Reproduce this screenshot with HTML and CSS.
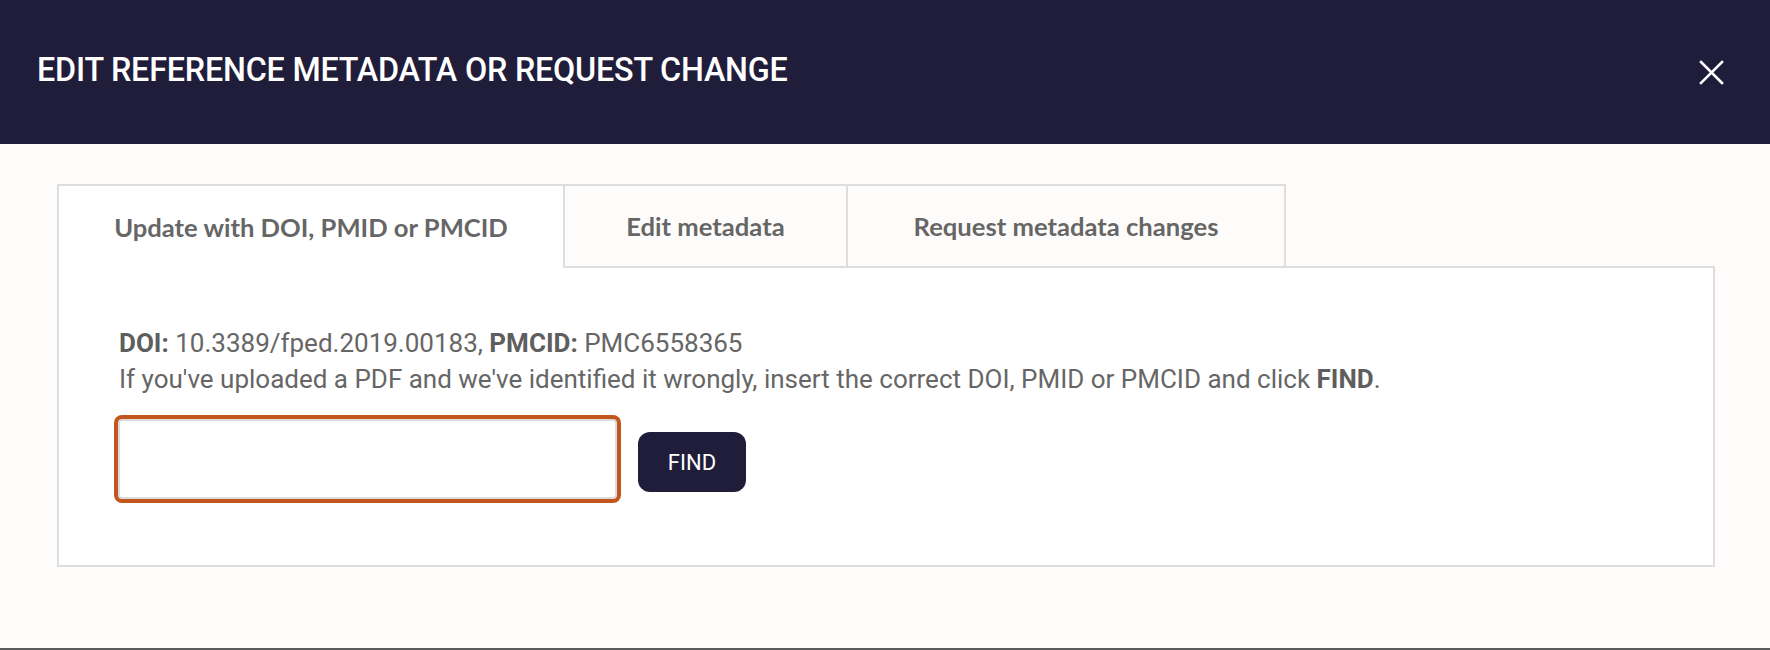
FILE: index.html
```html
<!DOCTYPE html>
<html lang="en">
<head>
    <meta charset="UTF-8">
    <meta name="viewport" content="width=device-width, initial-scale=1.0">
    <title>Edit reference metadata</title>
    <link rel="stylesheet" href="styles.css">
</head>
<body>

<div class="modal">
    <div class="modal-header">
        <h1>EDIT REFERENCE METADATA OR REQUEST CHANGE</h1>
        <button class="close-btn" aria-label="Close">
            <svg width="25" height="25" viewBox="0 0 25 25">
                <path d="M2 2 L23 23 M23 2 L2 23" stroke="#fff" stroke-width="2.6" stroke-linecap="square"/>
            </svg>
        </button>
    </div>

    <div class="modal-body">
        <!-- Tabs -->
        <div class="tabs">
            <div class="tab tab-doi active">Update with DOI, PMID or PMCID</div>
            <div class="tab tab-edit">Edit metadata</div>
            <div class="tab tab-request">Request metadata changes</div>
        </div>

        <div class="tab-panel">
            <p class="info">
                <b>DOI:</b> 10.3389/fped.2019.00183, <b>PMCID:</b> PMC6558365<br>
                If you've uploaded a PDF and we've identified it wrongly, insert the correct DOI, PMID or PMCID and click <b>FIND</b>.
            </p>
            <div class="find-row">
                <input type="text" class="id-input">
                <button class="find-btn">FIND</button>
            </div>
        </div>
    </div>
</div>

</body>
</html>
```

FILE: styles.css
```css
body {
    margin: 0;
    background-color: #fdfcfa;
    font-family: Roboto, "Liberation Sans", sans-serif;
}

.modal {
    height: 648px;
    border-bottom: 2px solid #5a5a5a;
}

.modal-header {
    height: 144px;
    background-color: #1f1d3a;
    display: flex;
    justify-content: space-between;
    align-items: center;
    padding: 0 46px 0 37px;
}

.modal-header h1 {
    margin: 0 0 4px 0;
    color: #fff;
    font-size: 32.3px;
    font-weight: 500;
    letter-spacing: -0.2px;
}

.close-btn {
    background: none;
    border: none;
    padding: 0;
    display: flex;
    cursor: pointer;
}

.modal-body {
    padding: 40px 55px 0 57px;
}

.tabs {
    display: flex;
}

.tab {
    box-sizing: border-box;
    height: 82px;
    display: flex;
    align-items: center;
    justify-content: center;
    border: 2px solid #dedede;
    border-bottom: none;
    border-left: none;
    font-family: Lato, "Open Sans", sans-serif;
    font-weight: 700;
    font-size: 25.6px;
    color: #666;
}

.tab-doi {
    width: 508px;
    border-left: 2px solid #dedede;
}

.tab-edit {
    width: 283px;
}

.tab-request {
    width: 438px;
}

.tab.active {
    background-color: #fff;
    height: 84px;
    margin-bottom: -2px;
    position: relative;
}

.tab-panel {
    background-color: #fff;
    border: 2px solid #dedede;
    padding: 58px 60px 66px 60px;
}

.info {
    margin: 0;
    font-size: 26px;
    line-height: 35.5px;
    color: #666;
}

.info b {
    color: #5e5e5e;
}

.find-row {
    display: flex;
    align-items: flex-start;
    margin-top: 22px;
    gap: 21px;
}

.id-input {
    width: 499px;
    height: 80px;
    box-sizing: border-box;
    border: 2px solid #dcdcdc;
    border-radius: 4px;
    box-shadow: 0 0 0 4px #c3561f;
    margin-left: -1px;
    outline: none;
    background: #fff;
}

.find-btn {
    margin-top: 13px;
    height: 60px;
    width: 108px;
    border: none;
    border-radius: 12px;
    background-color: #1f1d3a;
    color: #fff;
    font-family: Roboto, "Liberation Sans", sans-serif;
    font-size: 22px;
    cursor: pointer;
}
```
